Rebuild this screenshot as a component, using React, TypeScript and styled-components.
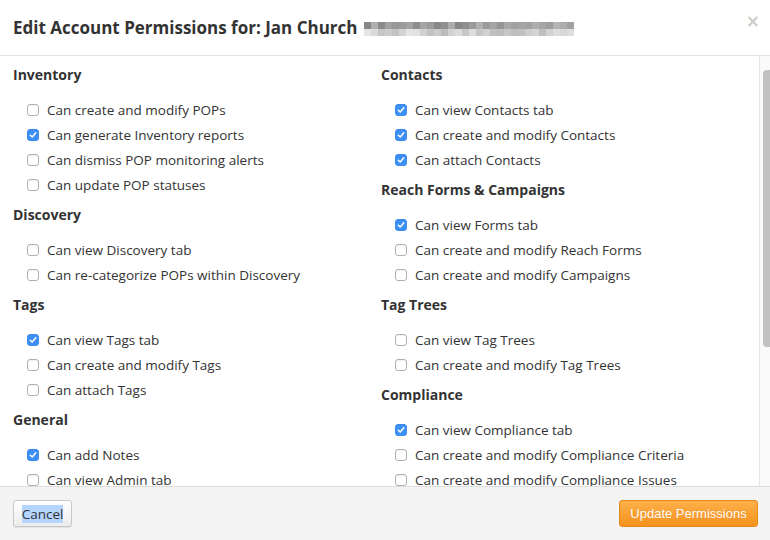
import * as React from 'react'
import styled, { createGlobalStyle } from 'styled-components'

// Page-level reset
const GlobalStyle = createGlobalStyle`
  html, body {
    margin: 0;
    padding: 0;
    background: #ffffff;
    overflow: hidden;
  }
  body {
    font-family: "Open Sans", "Noto Sans", sans-serif;
    color: #333333;
  }
`

type Permission = {
    label: string
    checked: boolean
}

type Group = {
    title: string
    items: Permission[]
}

const leftGroups: Group[] = [
    {
        title: 'Inventory',
        items: [
            { label: 'Can create and modify POPs', checked: false },
            { label: 'Can generate Inventory reports', checked: true },
            { label: 'Can dismiss POP monitoring alerts', checked: false },
            { label: 'Can update POP statuses', checked: false },
        ],
    },
    {
        title: 'Discovery',
        items: [
            { label: 'Can view Discovery tab', checked: false },
            { label: 'Can re-categorize POPs within Discovery', checked: false },
        ],
    },
    {
        title: 'Tags',
        items: [
            { label: 'Can view Tags tab', checked: true },
            { label: 'Can create and modify Tags', checked: false },
            { label: 'Can attach Tags', checked: false },
        ],
    },
    {
        title: 'General',
        items: [
            { label: 'Can add Notes', checked: true },
            { label: 'Can view Admin tab', checked: false },
            { label: 'Can manage Users', checked: false },
            { label: 'Can edit Account settings', checked: false },
        ],
    },
]

const rightGroups: Group[] = [
    {
        title: 'Contacts',
        items: [
            { label: 'Can view Contacts tab', checked: true },
            { label: 'Can create and modify Contacts', checked: true },
            { label: 'Can attach Contacts', checked: true },
        ],
    },
    {
        title: 'Reach Forms & Campaigns',
        items: [
            { label: 'Can view Forms tab', checked: true },
            { label: 'Can create and modify Reach Forms', checked: false },
            { label: 'Can create and modify Campaigns', checked: false },
        ],
    },
    {
        title: 'Tag Trees',
        items: [
            { label: 'Can view Tag Trees', checked: false },
            { label: 'Can create and modify Tag Trees', checked: false },
        ],
    },
    {
        title: 'Compliance',
        items: [
            { label: 'Can view Compliance tab', checked: true },
            { label: 'Can create and modify Compliance Criteria', checked: false },
            { label: 'Can create and modify Compliance Issues', checked: false },
        ],
    },
]

const Modal = styled.div`
    width: 770px;
    height: 540px;
    display: flex;
    flex-direction: column;
    background: #ffffff;
`

const Header = styled.div`
    height: 55px;
    flex-shrink: 0;
    display: flex;
    align-items: center;
    padding: 0 13px;
    border-bottom: 1px solid #e5e5e5;
`

const Title = styled.h3`
    margin: 0;
    font-size: 17px;
    font-weight: 700;
    color: #333333;
    white-space: nowrap;
`

const Mosaic = styled.div`
    display: grid;
    grid-template-columns: repeat(30, 7px);
    grid-auto-rows: 7px;
    margin-left: 6px;
    margin-top: 2px;
`

const CloseButton = styled.button`
    margin-left: auto;
    margin-right: -3px;
    margin-top: -13px;
    border: none;
    background: none;
    padding: 0;
    font-family: "DejaVu Sans", sans-serif;
    font-size: 17px;
    font-weight: 700;
    color: #cccccc;
    cursor: pointer;
`

const Body = styled.div`
    flex: 1;
    min-height: 0;
    display: flex;
`

const Scroller = styled.div`
    flex: 1;
    overflow: hidden;
`

// drawn rail: the page's native scrollbars are hidden in the capture
const ScrollRail = styled.div`
    width: 10px;
    flex-shrink: 0;
    background: #fafafa;
    border-left: 1px solid #e8e8e8;
    padding-top: 14px;
`

const ScrollThumb = styled.div`
    height: 277px;
    margin-left: 3px;
    background: #c1c1c1;
    border-radius: 4px 0 0 4px;
`

const Columns = styled.div`
    display: grid;
    grid-template-columns: 368px 1fr;
    padding: 2px 0 40px 13px;
`

const Column = styled.div`
    display: flex;
    flex-direction: column;
`

const GroupTitle = styled.h4`
    margin: 7px 0 13px;
    font-size: 14px;
    line-height: 20px;
    font-weight: 700;
    color: #333333;
`

const Item = styled.label`
    display: flex;
    align-items: center;
    gap: 8px;
    height: 25px;
    padding-left: 14px;
    padding-bottom: 1px;
    box-sizing: border-box;
    font-size: 13.5px;
    color: #333333;
    white-space: nowrap;
`

const Box = styled.span<{ $checked: boolean }>`
    width: 12px;
    height: 12px;
    box-sizing: border-box;
    border-radius: 3px;
    flex-shrink: 0;
    display: flex;
    align-items: center;
    justify-content: center;
    border: 1px solid ${p => (p.$checked ? '#3a8cf0' : '#b0b0b0')};
    background: ${p => (p.$checked ? '#3d8ff3' : '#ffffff')};
    box-shadow: ${p => (p.$checked ? 'none' : 'inset 0 1px 1px rgba(0,0,0,0.06)')};
`

const Footer = styled.div`
    height: 53px;
    flex-shrink: 0;
    display: flex;
    align-items: center;
    justify-content: space-between;
    padding: 0 12px 0 13px;
    background: #f4f4f4;
    border-top: 1px solid #dddddd;
`

const CancelButton = styled.button`
    height: 27px;
    width: 59px;
    border: 1px solid #c8c8c8;
    border-radius: 3px;
    background: linear-gradient(#ffffff, #ececec);
    box-shadow: 0 1px 1px rgba(0, 0, 0, 0.08);
    font-family: "Open Sans", sans-serif;
    font-size: 13.5px;
    color: #333333;
    padding: 0;
    cursor: pointer;
`

const Selected = styled.span`
    background: #b4d5fe;
`

const PrimaryButton = styled.button`
    height: 27px;
    width: 139px;
    border: 1px solid #e58a16;
    border-radius: 3px;
    background: linear-gradient(#fdb04a, #f7931e);
    font-family: "Liberation Sans", Arial, sans-serif;
    font-size: 13px;
    color: #ffffff;
    text-shadow: 0 0 1px rgba(180, 90, 0, 0.35);
    padding: 0;
    cursor: pointer;
`

const Checkbox: React.FC<{ checked: boolean }> = ({ checked }) => (
    <Box $checked={checked}>
        {checked && (
            <svg width="8" height="8" viewBox="0 0 8 8">
                <path d="M1.3 4.2 L3.2 6 L6.8 1.8" fill="none" stroke="#ffffff" strokeWidth="1.5" strokeLinecap="round" strokeLinejoin="round" />
            </svg>
        )}
    </Box>
)

// pixelated (redacted) email after the name
const mosaicCells = Array.from({ length: 60 }, (_, i) => {
    const row = Math.floor(i / 30)
    const seed = Math.abs(Math.sin(i * 12.9898) * 43758.5453) % 1
    const base = row === 0 ? 135 : 185
    const v = Math.round(base + seed * 45)
    return `rgb(${v},${v},${v})`
})

const PermissionGroup: React.FC<{ group: Group }> = ({ group }) => (
    <>
        <GroupTitle>{group.title}</GroupTitle>
        {group.items.map(item => (
            <Item key={item.label}>
                <Checkbox checked={item.checked} />
                {item.label}
            </Item>
        ))}
    </>
)

export default function App() {
    return (
        <Modal>
            <GlobalStyle />
            <Header>
                <Title>Edit Account Permissions for: Jan Church</Title>
                <Mosaic>
                    {mosaicCells.map((c, i) => (
                        <span key={i} style={{ background: c }} />
                    ))}
                </Mosaic>
                <CloseButton>×</CloseButton>
            </Header>
            <Body>
                <Scroller>
                    <Columns>
                        <Column>
                            {leftGroups.map(g => (
                                <PermissionGroup key={g.title} group={g} />
                            ))}
                        </Column>
                        <Column>
                            {rightGroups.map(g => (
                                <PermissionGroup key={g.title} group={g} />
                            ))}
                        </Column>
                    </Columns>
                </Scroller>
                <ScrollRail>
                    <ScrollThumb />
                </ScrollRail>
            </Body>
            <Footer>
                <CancelButton>
                    <Selected>Cancel</Selected>
                </CancelButton>
                <PrimaryButton>Update Permissions</PrimaryButton>
            </Footer>
        </Modal>
    )
}
